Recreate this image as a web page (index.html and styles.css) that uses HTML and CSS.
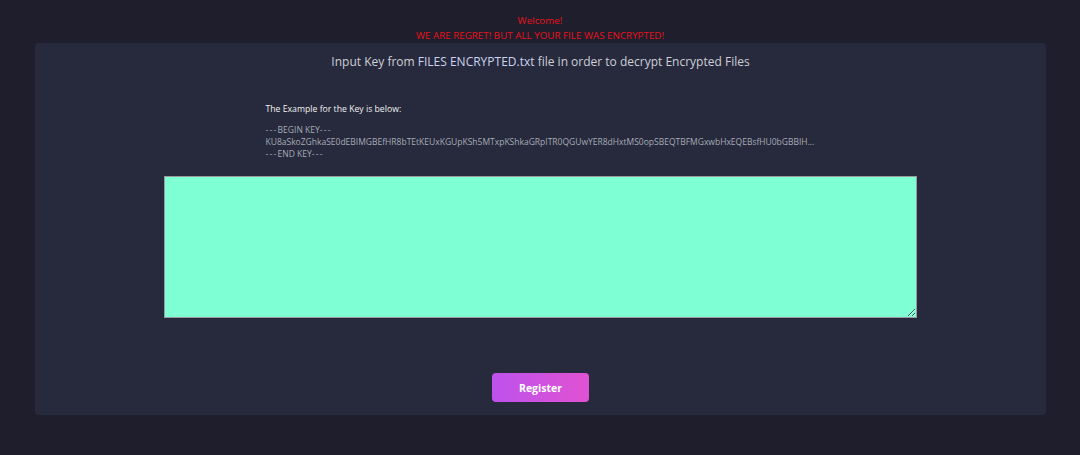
FILE: index.html
```html
<!DOCTYPE html>
<html>
<head>
<meta charset="utf-8">
<link rel="stylesheet" href="styles.css">
</head>
<body>
<div class="alert">
  <div class="alert-line">Welcome!</div>
  <div class="alert-line">WE ARE REGRET! BUT ALL YOUR FILE WAS ENCRYPTED!</div>
</div>
<main class="panel">
  <h1 class="title">Input Key from <span class="fname">FILES ENCRYPTED.txt</span> file in order to decrypt Encrypted Files</h1>
  <section class="example">
    <p class="example-label">The Example for the Key is below:</p>
    <div class="key">
      <div class="key-line"><span class="dash">---</span>BEGIN KEY<span class="dash">---</span></div>
      <div class="key-line key-body">KU8aSkoZGhkaSE0dEBIMGBEfHR8bTEtKEUxKGUpKSh5MTxpKShkaGRpITR0QGUwYER8dHxtMS0opSBEQTBFMGxwbHxEQEBsfHU0bGBBIH...</div>
      <div class="key-line"><span class="dash">---</span>END KEY<span class="dash">---</span></div>
    </div>
  </section>
  <div class="field">
    <textarea class="key-input"></textarea>
  </div>
  <div class="actions">
    <button class="btn">Register</button>
  </div>
</main>
</body>
</html>
```
FILE: styles.css
```css
* { box-sizing: border-box; }
html, body { margin: 0; padding: 0; }
body {
  background: #1f1e2c;
  font-family: "Open Sans", "Liberation Sans", sans-serif;
  height: 455px;
  padding-top: 13px;
}
.alert {
  text-align: center;
  color: #e8121c;
  font-size: 9.8px;
  line-height: 15px;
}
.panel {
  margin: 0 34px 0 35px;
  height: 372px;
  background: #262a3c;
  border-radius: 4px;
  padding-top: 10px;
  display: flex;
  flex-direction: column;
  align-items: center;
}
.title {
  margin: 0;
  font-size: 12px;
  font-weight: 400;
  color: #cfcfd8;
  line-height: 18px;
}
.fname { color: #cdd3f0; }
.example {
  width: 550px;
  margin-top: 32px;
}
.example-label {
  margin: 0;
  color: #f2f2f2;
  font-size: 8.7px;
  line-height: 12px;
}
.key {
  margin-top: 9px;
  color: #a8aab6;
  font-size: 8.5px;
  line-height: 12px;
}
.key-line {
  white-space: nowrap;
}
.dash {
  letter-spacing: 1.3px;
}
.field {
  margin-top: 16px;
  width: 753px;
}
.key-input {
  display: block;
  width: 753px;
  height: 142px;
  background: #7fffd4;
  border: 1px solid #9a9a9a;
  margin: 0;
  padding: 2px;
}
.actions {
  margin-top: 55px;
}
.btn {
  width: 97px;
  height: 29px;
  border: 0;
  border-radius: 4px;
  background: linear-gradient(90deg, #bd52ec, #e052d2);
  color: #fff;
  font-family: "Open Sans", "Liberation Sans", sans-serif;
  font-weight: 700;
  font-size: 10.5px;
}
```
